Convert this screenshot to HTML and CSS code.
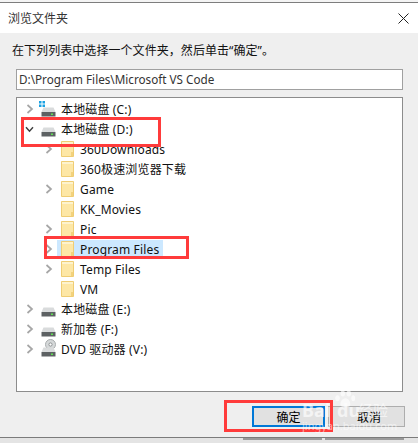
FILE: index.html
```html
<!DOCTYPE html>
<html lang="zh-CN">
  <head>
    <meta charset="UTF-8" />
    <title>浏览文件夹</title>
    <link rel="stylesheet" href="styles.css">
  </head>
  <body>
    <svg class="defs" width="0" height="0">
      <symbol id="chev-right" viewBox="0 0 8 10">
        <path d="M1.5 1 L6 5 L1.5 9" fill="none" stroke="#a6a6a6" stroke-width="1.7" />
      </symbol>
      <symbol id="chev-down" viewBox="0 0 10 8">
        <path d="M1 1.5 L5 6 L9 1.5" fill="none" stroke="#404040" stroke-width="1.7" />
      </symbol>
      <symbol id="folder" viewBox="0 0 13 16">
        <path d="M0.5 0.5 H12.5 V15.5 H0.5 Z" fill="#fde7a6" stroke="#efcd74" />
        <path d="M1 1 H12 V3 H1 Z" fill="#fef3cd" />
        <path d="M10 11 H12 V15 H10 Z" fill="#f3d27c" />
      </symbol>
      <symbol id="drive" viewBox="0 0 15 10">
        <path d="M2.5 0.5 H12.5 L14.5 5 H0.5 Z" fill="#d9dbdc" />
        <path d="M0.5 5 H14.5 V9.5 H0.5 Z" fill="#5d6163" />
        <rect x="10" y="6.5" width="2" height="1.5" fill="#5fe04f" />
      </symbol>
    </svg>

    <div class="strip"></div>
    <div class="dialog">
      <div class="titlebar">
        <span class="title">浏览文件夹</span>
        <svg class="close" width="11" height="11" viewBox="0 0 11 11">
          <path d="M0.5 0.5 L10.5 10.5 M10.5 0.5 L0.5 10.5" stroke="#222" stroke-width="1" />
        </svg>
      </div>
      <div class="content">
        <p class="hint">在下列列表中选择一个文件夹，然后单击“确定”。</p>
        <div class="path">D:\Program Files\Microsoft VS Code</div>
        <div class="tree">
          <div class="row">
            <svg class="chev"><use href="#chev-right" /></svg>
            <span class="drive-icon">
              <svg class="winflag" width="6" height="6" viewBox="0 0 6 6">
                <path d="M0 0 H2.5 V2.5 H0 Z M3.5 0 H6 V2.5 H3.5 Z M0 3.5 H2.5 V6 H0 Z M3.5 3.5 H6 V6 H3.5 Z" fill="#1ba1e2" />
              </svg>
              <svg class="drive"><use href="#drive" /></svg>
            </span>
            <span class="label">本地磁盘 (C:)</span>
          </div>
          <div class="row">
            <svg class="chev-open"><use href="#chev-down" /></svg>
            <span class="drive-icon"><svg class="drive"><use href="#drive" /></svg></span>
            <span class="label">本地磁盘 (D:)</span>
          </div>
          <div class="row sub">
            <svg class="chev"><use href="#chev-right" /></svg>
            <svg class="folder"><use href="#folder" /></svg>
            <span class="label">360Downloads</span>
          </div>
          <div class="row sub">
            <span class="chev"></span>
            <svg class="folder"><use href="#folder" /></svg>
            <span class="label">360极速浏览器下载</span>
          </div>
          <div class="row sub">
            <svg class="chev"><use href="#chev-right" /></svg>
            <svg class="folder"><use href="#folder" /></svg>
            <span class="label">Game</span>
          </div>
          <div class="row sub">
            <span class="chev"></span>
            <svg class="folder"><use href="#folder" /></svg>
            <span class="label">KK_Movies</span>
          </div>
          <div class="row sub">
            <svg class="chev"><use href="#chev-right" /></svg>
            <svg class="folder"><use href="#folder" /></svg>
            <span class="label">Pic</span>
          </div>
          <div class="row sub selected">
            <svg class="chev"><use href="#chev-right" /></svg>
            <span class="sel-box">
              <svg class="folder"><use href="#folder" /></svg>
              <span class="label">Program Files</span>
            </span>
          </div>
          <div class="row sub">
            <svg class="chev"><use href="#chev-right" /></svg>
            <svg class="folder"><use href="#folder" /></svg>
            <span class="label">Temp Files</span>
          </div>
          <div class="row sub">
            <span class="chev"></span>
            <svg class="folder"><use href="#folder" /></svg>
            <span class="label">VM</span>
          </div>
          <div class="row">
            <svg class="chev"><use href="#chev-right" /></svg>
            <span class="drive-icon"><svg class="drive"><use href="#drive" /></svg></span>
            <span class="label">本地磁盘 (E:)</span>
          </div>
          <div class="row">
            <svg class="chev"><use href="#chev-right" /></svg>
            <span class="drive-icon"><svg class="drive"><use href="#drive" /></svg></span>
            <span class="label">新加卷 (F:)</span>
          </div>
          <div class="row">
            <svg class="chev"><use href="#chev-right" /></svg>
            <span class="drive-icon">
              <svg class="disc" width="11" height="11" viewBox="0 0 11 11">
                <circle cx="5.5" cy="5.5" r="5" fill="#d5d8d9" stroke="#a9adae" />
                <circle cx="5.5" cy="5.5" r="1.6" fill="#fff" stroke="#8f9394" />
              </svg>
              <svg class="drive"><use href="#drive" /></svg>
            </span>
            <span class="label">DVD 驱动器 (V:)</span>
          </div>
        </div>
        <div class="actions">
          <button class="btn btn-ok">确定</button>
          <button class="btn btn-cancel">取消</button>
        </div>
      </div>
    </div>
    <div class="under">
      <span class="under-tab"></span>
      <span class="under-tab"></span>
    </div>

    <!-- annotations drawn on top of the dialog -->
    <div class="mark mark-drive"></div>
    <div class="mark mark-folder"></div>
    <div class="mark mark-ok"></div>

    <div class="watermark">
      <svg class="paw" width="26" height="18" viewBox="0 0 28 24">
        <g fill="#fff" opacity="0.65">
          <ellipse cx="4" cy="11" rx="3" ry="4" />
          <ellipse cx="11" cy="4.5" rx="3" ry="4" />
          <ellipse cx="19" cy="4.5" rx="3" ry="4" />
          <ellipse cx="25" cy="11" rx="2.6" ry="4" />
          <path d="M14.5 11 C19 11 22 17 21 20.5 C19.5 23.5 9.5 23.5 8 20.5 C7 17 10 11 14.5 11 Z" />
        </g>
      </svg>
      <span class="wm-brand">Bai</span>
      <span class="wm-brand wm-du">du</span>
      <span class="wm-cn">经验</span>
      <span class="wm-url">jingyan.baidu.com</span>
    </div>
  </body>
</html>
```

FILE: styles.css
```css
* {
  box-sizing: border-box;
}

html,
body {
  margin: 0;
  height: 443px;
  overflow: hidden;
}

body {
  position: relative;
  width: 418px;
  background-color: #e4e4e4;
  font-family: "Noto Sans", "Noto Sans CJK SC", sans-serif;
  font-size: 12px;
  color: #111;
}

.defs {
  position: absolute;
}

.strip {
  height: 3px;
  background-color: #f4f4f4;
  border-bottom: 1px solid #7d7d7d;
}

.dialog {
  height: 435px;
  border-bottom: 1px solid #7b7b7b;
  background-color: #efefef;
}

.titlebar {
  height: 30px;
  padding: 0 8px;
  display: flex;
  align-items: center;
  justify-content: space-between;
  background-color: #ffffff;
}

.title {
  color: #333;
}

.close {
  margin-right: 1px;
}

.content {
  padding: 0 15px 0 16px;
}

.hint {
  margin: 0 0 0 -4px;
  height: 36px;
  padding-top: 8px;
  line-height: 20px;
  letter-spacing: 0.06px;
}

.path {
  height: 21px;
  line-height: 19px;
  padding-left: 2px;
  background-color: #ffffff;
  border: 1px solid #a0a0a0;
  font-size: 11.7px;
  color: #333;
}

.tree {
  height: 295px;
  margin-top: 7px;
  padding-top: 1px;
  background-color: #ffffff;
  border: 1px solid #8c8c8c;
}

.row {
  height: 20px;
  display: flex;
  align-items: center;
  padding-left: 9px;
  white-space: nowrap;
}

.row.sub {
  padding-left: 28px;
}

.chev {
  width: 8px;
  height: 10px;
  margin-right: 7px;
  flex: none;
}

.row.sub .chev {
  margin-right: 8px;
}

.chev-open {
  width: 9px;
  height: 7px;
  margin-left: -1px;
  margin-right: 7px;
  flex: none;
}

.drive-icon {
  position: relative;
  width: 15px;
  height: 16px;
  margin-right: 5px;
  flex: none;
}

.drive {
  position: absolute;
  left: 0;
  bottom: 0;
  width: 15px;
  height: 10px;
}

.winflag {
  position: absolute;
  left: -2px;
  top: 0;
}

.disc {
  position: absolute;
  right: 0;
  top: -2px;
}

.folder {
  width: 13px;
  height: 16px;
  margin-right: 6px;
  flex: none;
}

.label {
  letter-spacing: 0.15px;
}

.sel-box {
  display: flex;
  align-items: center;
  height: 19px;
  margin-left: -4px;
  padding-left: 4px;
  padding-right: 4px;
  background-color: #cce8ff;
}

.actions {
  display: flex;
  justify-content: flex-end;
  gap: 3px;
  margin-top: 14px;
  margin-right: -2px;
}

.btn {
  height: 21px;
  padding: 0;
  font-family: inherit;
  font-size: 12px;
  color: #000;
  background-color: #e1e1e1;
  border: 1px solid #adadad;
}

.btn-ok {
  width: 73px;
  border: 2px solid #0078d7;
}

.btn-cancel {
  width: 77px;
  padding-left: 5px;
}

.under {
  display: flex;
  justify-content: flex-end;
  gap: 3px;
  padding-right: 14px;
}

.under-tab {
  width: 79px;
  height: 2px;
  background-color: #9a9a9a;
}

.mark {
  position: absolute;
  border: 3px solid #ff3b3b;
}

.mark-drive {
  left: 21px;
  top: 117px;
  width: 140px;
  height: 30px;
}

.mark-folder {
  left: 44px;
  top: 236px;
  width: 145px;
  height: 23px;
}

.mark-ok {
  left: 224px;
  top: 400px;
  width: 109px;
  height: 32px;
}

.watermark {
  position: absolute;
  left: 0;
  top: 0;
  color: #fff;
}

.watermark span,
.paw {
  position: absolute;
  white-space: nowrap;
}

.paw {
  left: 332px;
  top: 390px;
}

.wm-brand {
  left: 302px;
  top: 400px;
  font-size: 18px;
  font-weight: 700;
  line-height: 20px;
  opacity: 0.65;
}

.wm-du {
  left: 337px;
}

.wm-cn {
  left: 358px;
  top: 400px;
  font-size: 15px;
  line-height: 20px;
  opacity: 0.6;
}

.wm-url {
  left: 302px;
  top: 419px;
  font-size: 11px;
  line-height: 14px;
  opacity: 0.55;
}
```
